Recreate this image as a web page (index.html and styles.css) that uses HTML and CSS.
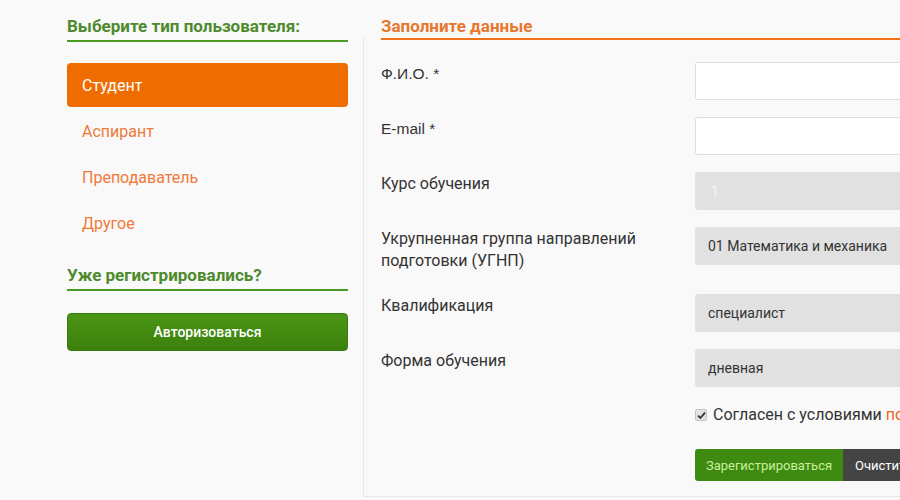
FILE: index.html
```html
<!DOCTYPE html>
<html lang="ru">
<head>
<meta charset="utf-8">
<title>Регистрация</title>
<link rel="stylesheet" href="styles.css">
</head>
<body>
<div class="page">
  <aside class="side">
    <h2 class="side-title">Выберите тип пользователя:</h2>
    <nav class="types">
      <a class="type active" href="#">Студент</a>
      <a class="type" href="#">Аспирант</a>
      <a class="type" href="#">Преподаватель</a>
      <a class="type" href="#">Другое</a>
    </nav>
    <h2 class="side-title second">Уже регистрировались?</h2>
    <button class="login-btn" type="button">Авторизоваться</button>
  </aside>
  <main class="main">
    <h2 class="main-title">Заполните данные</h2>
    <div class="panel">
      <div class="rule"></div>
      <form class="form">
        <div class="row">
          <label class="label req">Ф.И.О. *</label>
          <div class="field input"></div>
        </div>
        <div class="row">
          <label class="label req">E-mail *</label>
          <div class="field input"></div>
        </div>
        <div class="row">
          <label class="label">Курс обучения</label>
          <div class="field select disabled">1</div>
        </div>
        <div class="row">
          <label class="label">Укрупненная группа направлений подготовки (УГНП)</label>
          <div class="field select">01 Математика и механика</div>
        </div>
        <div class="row">
          <label class="label">Квалификация</label>
          <div class="field select">специалист</div>
        </div>
        <div class="row">
          <label class="label">Форма обучения</label>
          <div class="field select">дневная</div>
        </div>
        <div class="agree">
          <span class="check"><svg width="9" height="9" viewBox="0 0 9 9"><path d="M1 4.6 L3.4 7 L8 1.6" fill="none" stroke="#333" stroke-width="1.8"/></svg></span>
          <span>Согласен с условиями <a href="#" class="link">политики конфиденциальности</a></span>
        </div>
        <div class="actions">
          <button type="button" class="btn-reg">Зарегистрироваться</button>
          <button type="button" class="btn-clear">Очистить форму</button>
        </div>
      </form>
    </div>
  </main>
</div>
</body>
</html>
```
FILE: styles.css
```css
* { box-sizing: border-box; }
html, body {
  margin: 0;
  padding: 0;
  background: #f9f9f9;
  overflow: hidden;
  font-family: Roboto, "Liberation Sans", Arial, sans-serif;
  color: #333;
}
.page {
  display: flex;
  width: 1200px;
  padding-left: 67px;
  padding-top: 14px;
}
.side {
  width: 281px;
  flex: 0 0 281px;
}
.side-title {
  margin: 0;
  font-size: 17px;
  font-weight: 700;
  line-height: 24px;
  color: #4d8a2c;
  padding-bottom: 2px;
  border-bottom: 2px solid #4d9a22;
}
.side-title.second {
  margin-top: 16px;
}
.types {
  display: flex;
  flex-direction: column;
  margin-top: 21px;
}
.type {
  display: block;
  height: 44px;
  line-height: 45px;
  margin-bottom: 2px;
  padding-left: 15px;
  font-size: 16px;
  color: #f07a3a;
  text-decoration: none;
  border-radius: 4px;
}
.type.active {
  background: #ef6c00;
  color: #fff;
}
.login-btn {
  display: block;
  width: 100%;
  height: 38px;
  margin-top: 22px;
  border: 1px solid #3a7a0d;
  border-radius: 4px;
  background: linear-gradient(#4b9616, #3c800c);
  color: #fff;
  font-family: Roboto, "Liberation Sans", Arial, sans-serif;
  font-size: 14px;
  font-weight: 500;
}
.main {
  margin-left: 15px;
  flex: 1;
}
.main-title {
  margin: 0 0 0 18px;
  font-size: 17px;
  font-weight: 700;
  line-height: 24px;
  height: 22px;
  color: #e8772e;
}
.panel {
  margin-top: 2px;
  border-left: 1px solid #e8e8e8;
  border-bottom: 1px solid #e8e8e8;
  padding: 0 0 15px 17px;
}
.rule {
  margin-top: 2px;
  height: 2px;
  background: #ef7314;
}
.form {
  padding-top: 22px;
}
.row {
  display: flex;
  align-items: flex-start;
  margin-bottom: 17px;
}
.label {
  flex: 0 0 314px;
  width: 314px;
  padding-right: 40px;
  font-size: 16px;
  line-height: 22px;
  padding-top: 1px;
  padding-bottom: 5px;
  color: #333;
}
.label.req {
  font-family: "Liberation Sans", Arial, sans-serif;
  font-size: 15.5px;
}
.field {
  flex: 0 0 320px;
  height: 38px;
  border-radius: 3px;
  font-size: 14px;
  line-height: 38px;
  padding-left: 13px;
  color: #333;
}
.input {
  background: #fff;
  border: 1px solid #dedede;
}
.select {
  background: #e1e1e1;
}
.select.disabled {
  color: #f4f4f4;
  padding-left: 16px;
}
.agree {
  display: flex;
  align-items: center;
  margin-left: 314px;
  font-size: 16px;
  line-height: 22px;
  white-space: nowrap;
  margin-top: 17px;
}
.check {
  display: inline-flex;
  align-items: center;
  justify-content: center;
  width: 12px;
  height: 12px;
  margin-right: 6px;
  border: 1px solid #c4c4c4;
  border-radius: 2px;
  background: #e2e2e2;
}
.link {
  color: #f0641e;
  text-decoration: none;
}
.actions {
  display: flex;
  margin-left: 314px;
  margin-top: 23px;
}
.btn-reg, .btn-clear {
  height: 32px;
  border: none;
  font-family: Roboto, "Liberation Sans", Arial, sans-serif;
  font-size: 13px;
  white-space: nowrap;
}
.btn-reg {
  width: 148px;
  background: #3f8a10;
  color: #c8f09e;
  border-radius: 3px 0 0 3px;
}
.btn-clear {
  background: #444;
  color: #fff;
  padding: 0 12px;
  text-align: left;
}
```
